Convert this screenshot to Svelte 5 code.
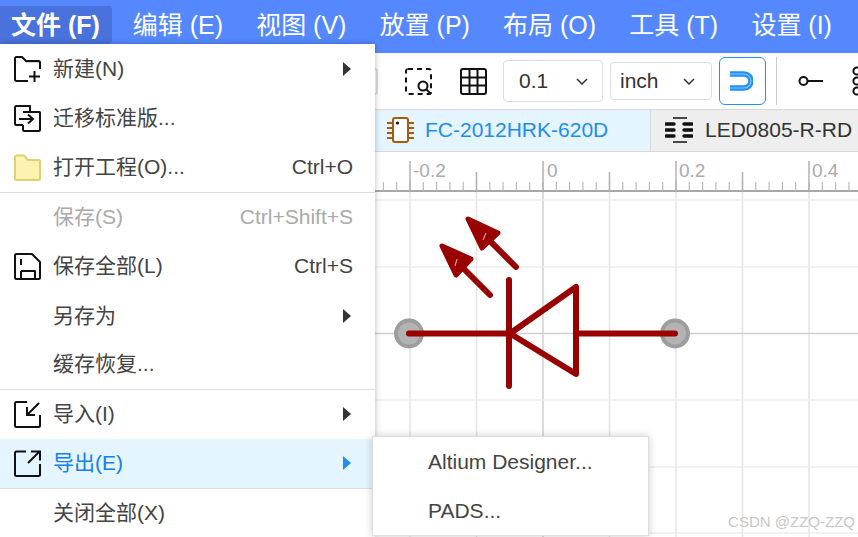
<script>
  const menu = [
    { label: '新建(N)', icon: 'new', arrow: true },
    { label: '迁移标准版...', icon: 'move' },
    { label: '打开工程(O)...', icon: 'open', key: 'Ctrl+O', sep: true },
    { label: '保存(S)', key: 'Ctrl+Shift+S', disabled: true },
    { label: '保存全部(L)', icon: 'save', key: 'Ctrl+S' },
    { label: '另存为', arrow: true },
    { label: '缓存恢复...', sep: true },
    { label: '导入(I)', icon: 'import', arrow: true },
    { label: '导出(E)', icon: 'export', arrow: true, active: true, sep: true },
    { label: '关闭全部(X)' }
  ];
  const nav = ['文件 (F)', '编辑 (E)', '视图 (V)', '放置 (P)', '布局 (O)', '工具 (T)', '设置 (I)'];
  const step = 66.5;
  const origin = 543;
  const vs = Array.from({ length: 9 }, (_, i) => origin + (i - 3) * step);
  const hs = [200, 267, 333.5, 400, 467, 533];
  const minors = Array.from({ length: 50 }, (_, i) => origin + (i - 15) * (step / 5)).filter((x) => x > 375);
  const labels = [
    { x: 413, t: '-0.2' },
    { x: 547, t: '0' },
    { x: 679, t: '0.2' },
    { x: 812, t: '0.4' }
  ];
</script>

<div class="app">
  <header class="nav">
    {#each nav as n, i}
      <div class="nav-item" class:open={i === 0}>{n}</div>
    {/each}
  </header>

  <div class="toolbar">
    <svg class="tool faint" width="27" height="27" viewBox="0 0 27 27" fill="none" stroke="#ddd" stroke-width="2">
      <rect x="1" y="1" width="25" height="25" rx="2" />
    </svg>
    <svg class="tool zoombox" width="27" height="27" viewBox="0 0 27 27" fill="none" stroke="#111" stroke-width="2">
      <rect x="1" y="1" width="25" height="25" rx="2" stroke-dasharray="5 4" />
      <circle cx="18" cy="18" r="4.5" fill="#fff" />
      <path d="M21 21l5 5" />
    </svg>
    <svg class="tool grid-ic" width="27" height="27" viewBox="0 0 27 27" fill="none" stroke="#111" stroke-width="2">
      <rect x="1" y="1" width="25" height="25" rx="2" />
      <path d="M9.5 1v25M17.5 1v25M1 9.5h25M1 17.5h25" />
    </svg>
    <div class="select big"><span>0.1</span><svg width="12" height="7" viewBox="0 0 12 7" fill="none" stroke="#333" stroke-width="1.5"><path d="M1 1l5 5 5-5" /></svg></div>
    <div class="select small"><span>inch</span><svg width="12" height="7" viewBox="0 0 12 7" fill="none" stroke="#333" stroke-width="1.5"><path d="M1 1l5 5 5-5" /></svg></div>
    <div class="magnet">
      <svg width="24" height="20" viewBox="0 0 24 20" fill="none">
        <path d="M1 3h14a7 7 0 0 1 0 14H1" stroke="#1e90ff" stroke-width="5.500" />
        <path d="M1 3h14a7 7 0 0 1 0 14H1" stroke="#fff" stroke-width="1.200" opacity=".5" />
      </svg>
    </div>
    <div class="vsep"></div>
    <svg class="pin" width="25" height="14" viewBox="0 0 25 14" fill="none" stroke="#111" stroke-width="2">
      <circle cx="5.5" cy="7" r="4" />
      <path d="M9.5 7H25" />
    </svg>
    <svg class="multi" width="14" height="30" viewBox="0 0 14 30" fill="none" stroke="#111" stroke-width="2">
      <circle cx="6" cy="5" r="3.6" /><circle cx="6" cy="15" r="3.6" /><circle cx="6" cy="25" r="3.6" />
    </svg>
  </div>

  <div class="tabs">
    <div class="tab active">
      <svg width="27" height="26" viewBox="0 0 27 26" fill="none" stroke="#a65a14" stroke-width="2">
        <rect x="6" y="1" width="15" height="24" rx="2" fill="#fff" />
        <path d="M0 6h6M0 11h6M0 16h6M0 21h6M21 6h6M21 11h6M21 16h6M21 21h6" />
        <circle cx="10.5" cy="6" r="1.6" fill="#111" stroke="none" />
      </svg>
      <span>FC-2012HRK-620D</span>
    </div>
    <div class="tab other">
      <svg width="28" height="26" viewBox="0 0 28 26" fill="none" stroke="#111">
        <path d="M8 1h14M8 25h14" stroke-width="1.4" />
        <path d="M1 7h8M19 7h8M1 13h8M19 13h8M1 19h8M19 19h8" stroke-width="3.4" stroke-linecap="round" />
      </svg>
      <span>LED0805-R-RD</span>
    </div>
  </div>

  <div class="canvas">
    <svg width="858" height="385" viewBox="0 152 858 385">
      {#each vs as x, i}
        <line x1={x} x2={x} y1="192" y2="537" stroke={i === 3 ? '#d0d0d0' : '#e4e4e4'} stroke-width="1.5" />
      {/each}
      {#each hs as y, i}
        <line x1="375" x2="858" y1={y} y2={y} stroke={i === 2 ? '#d0d0d0' : '#ececec'} stroke-width="1.5" />
      {/each}

      <line x1="375" x2="858" y1="191" y2="191" stroke="#a8a8a8" stroke-width="2" />
      {#each minors as x, i}
        <line x1={x} x2={x} y1="182" y2="191" stroke="#b8b8b8" stroke-width="1.2" />
      {/each}
      {#each vs as x, i}
        <line x1={x} x2={x} y1={i % 2 === 1 ? 161 : 172} y2="191" stroke="#b0b0b0" stroke-width="1.5" />
      {/each}
      {#each labels as l}
        <text x={l.x} y="177" class="rlabel">{l.t}</text>
      {/each}

      <circle cx="409" cy="333.5" r="13" fill="#b3b3b3" stroke="#9d9d9d" stroke-width="4" />
      <circle cx="675" cy="333.5" r="13" fill="#b3b3b3" stroke="#9d9d9d" stroke-width="4" />
      <g fill="none" stroke="#990000" stroke-width="6" stroke-linecap="round" stroke-linejoin="round">
        <path d="M409 333.5H509M576 333.5H675" />
        <path d="M509 280V386" />
        <path d="M510 333.5L576 287V374Z" />
        <path d="M490 295L458 263" />
        <path d="M442 246L471 259L456 275Z" fill="#990000" stroke-width="5" />
        <path d="M516 267L484 235" />
        <path d="M468 219L498 233L482 248Z" fill="#990000" stroke-width="5" />
      </g>
      <path d="M457 259l-2 7M486 233l-3 7" stroke="#dc9a9a" stroke-width="1.200" fill="none" />
    </svg>
    <div class="mark">CSDN @ZZQ-ZZQ</div>
  </div>

  <div class="menu">
    {#each menu as m}
      <div class="row" class:disabled={m.disabled} class:active={m.active} class:sep={m.sep}>
        <span class="ic">
          {#if m.icon === 'new'}
            <svg width="27" height="27" viewBox="0 0 27 27" fill="none" stroke="#111" stroke-width="2" stroke-linejoin="round">
              <path d="M14 25H2.5A1.5 1.5 0 0 1 1 23.500V2.500A1.500 1.500 0 0 1 2.500 1H8l4 4h12.500A1.500 1.500 0 0 1 26 6.500V13" />
              <path d="M12 5.500h13" stroke-width="1.400" />
              <path d="M20.500 15v11M15 20.500h11" />
            </svg>
          {:else if m.icon === 'move'}
            <svg width="27" height="27" viewBox="0 0 27 27" fill="none" stroke="#111" stroke-width="2" stroke-linejoin="round">
              <path d="M9 20H2.500A1.500 1.500 0 0 1 1 18.500V2.500A1.500 1.500 0 0 1 2.500 1H16v5" />
              <path d="M9 7h16.500a.5.500 0 0 1 .5.500V25a1 1 0 0 1-1 1H10.500A1.500 1.500 0 0 1 9 24.500V20" />
              <path d="M5 14h14M14 9.500l5 4.500-5 4.500" stroke-linejoin="miter" />
            </svg>
          {:else if m.icon === 'open'}
            <svg width="27" height="27" viewBox="0 0 27 27" fill="#fdf3b0" stroke="#e3cf70" stroke-width="2" stroke-linejoin="round">
              <path d="M1 3a1.500 1.500 0 0 1 1.500-1.500H10L14 6h11a1.500 1.500 0 0 1 1 1.500v17a1.500 1.500 0 0 1-1.500 1.500h-22A1.500 1.500 0 0 1 1 24.500Z" />
            </svg>
          {:else if m.icon === 'save'}
            <svg width="27" height="27" viewBox="0 0 27 27" fill="none" stroke="#111" stroke-width="2" stroke-linejoin="round">
              <path d="M2.500 1H18l8 8v15.500a1.500 1.500 0 0 1-1.500 1.500h-22A1.500 1.500 0 0 1 1 24.500v-22A1.500 1.500 0 0 1 2.500 1Z" />
              <path d="M7 18h14v8M7 18v8" />
              <path d="M7 6v6" />
            </svg>
          {:else if m.icon === 'import'}
            <svg width="27" height="27" viewBox="0 0 27 27" fill="none" stroke="#111" stroke-width="2" stroke-linejoin="round">
              <path d="M13 1H2.500A1.500 1.500 0 0 0 1 2.500v22A1.500 1.500 0 0 0 2.500 26h22a1.500 1.500 0 0 0 1.500-1.500V14" />
              <path d="M25 2L13 14M13 6v8h8" stroke-linejoin="miter" />
            </svg>
          {:else if m.icon === 'export'}
            <svg width="27" height="27" viewBox="0 0 27 27" fill="none" stroke="#111" stroke-width="2" stroke-linejoin="round">
              <path d="M12 1.500H2.500A1.500 1.500 0 0 0 1 3v21.500A1.500 1.500 0 0 0 2.500 26h22a1.500 1.500 0 0 0 1.500-1.500V14" />
              <path d="M26 1L14 13M17 1.500h9v9" stroke-linejoin="miter" />
            </svg>
          {/if}
        </span>
        <span class="label">{m.label}</span>
        {#if m.key}<span class="key">{m.key}</span>{/if}
        {#if m.arrow}<span class="arrow"></span>{/if}
      </div>
    {/each}
  </div>

  <div class="submenu">
    <div class="sub-row">Altium Designer...</div>
    <div class="sub-row">PADS...</div>
  </div>
</div>

<style>
  :global(body) {
    margin: 0;
    background: #fff;
  }
  .app {
    position: relative;
    width: 858px;
    height: 537px;
    overflow: hidden;
    font-family: "Liberation Sans", "Noto Sans CJK SC", sans-serif;
    color: #333;
  }
  .nav {
    height: 53px;
    background: #5588ff;
    display: flex;
    align-items: flex-start;
    gap: 21.200px;
    padding-top: 6px;
    box-sizing: border-box;
  }
  .nav-item {
    height: 38px;
    line-height: 38px;
    padding: 0 1px 0 11px;
    font-size: 25px;
    color: #fff;
    white-space: nowrap;
  }
  .nav-item.open {
    width: 112px;
    box-sizing: border-box;
    background: #4a72dc;
    border-radius: 0 4px 4px 0;
    font-weight: 700;
    margin-right: -11.500px;
  }
  .toolbar {
    height: 57px;
    border-bottom: 1px solid #d8d8d8;
    box-sizing: border-box;
    display: flex;
    align-items: center;
    padding-left: 351px;
    overflow: hidden;
  }
  .tool { flex: none; }
  .zoombox { margin-left: 27px; }
  .grid-ic { margin-left: 28px; }
  .select {
    flex: none;
    box-sizing: border-box;
    border: 1px solid #dcdcdc;
    border-radius: 4px;
    display: flex;
    align-items: center;
    justify-content: space-between;
    font-size: 21px;
  }
  .select.big {
    width: 100px;
    height: 42px;
    margin-left: 16px;
    padding: 0 14px 0 15px;
  }
  .select.small {
    width: 102px;
    height: 38px;
    margin-left: 7px;
    padding: 0 16px 0 9px;
  }
  .magnet {
    flex: none;
    box-sizing: border-box;
    width: 47px;
    height: 48px;
    margin-left: 7px;
    padding-right: 3px;
    border: 1px solid #1e90ff;
    border-radius: 6px;
    display: flex;
    align-items: center;
    justify-content: center;
  }
  .vsep {
    flex: none;
    width: 1px;
    height: 48px;
    background: #ccc;
    margin-left: 10px;
  }
  .pin { flex: none; margin-left: 21px; }
  .multi { flex: none; margin-left: 28px; }
  .tabs {
    height: 42px;
    display: flex;
    border-bottom: 1px solid #d8d8d8;
    box-sizing: border-box;
    padding-left: 375px;
    font-size: 21px;
  }
  .tab {
    display: flex;
    align-items: center;
    gap: 12px;
    box-sizing: border-box;
    white-space: nowrap;
    padding-bottom: 1px;
  }
  .tab.active {
    width: 275px;
    background: #e4f5ff;
    color: #1e8cf0;
    padding-left: 12px;
    gap: 11px;
  }
  .tab.other {
    flex: 1;
    background: #eeeeee;
    border-left: 1px solid #d8d8d8;
    padding-left: 14px;
    color: #333;
  }
  .canvas {
    position: relative;
    height: 385px;
    background: #fff;
  }
  .canvas svg { display: block; }
  .rlabel {
    font-size: 19px;
    fill: #aaa;
  }
  .mark {
    position: absolute;
    right: 3px;
    bottom: 7px;
    font-size: 15px;
    color: #c6c6c6;
  }
  .menu {
    position: absolute;
    left: 0;
    top: 44px;
    width: 375px;
    height: 493px;
    box-sizing: border-box;
    padding-top: 1px;
    background: #fff;
    box-shadow: 0 0 6px rgba(0, 0, 0, 0.28);
  }
  .row {
    height: 49.300px;
    box-sizing: border-box;
    display: flex;
    align-items: center;
    padding: 0 22px 1px 14px;
    font-size: 21px;
    color: #444;
    white-space: nowrap;
  }
  .row.sep { border-bottom: 1px solid #dcdcdc; }
  .row.disabled { color: #aaa; }
  .row.active { background: #e4f5ff; color: #1580e6; }
  .ic {
    flex: none;
    width: 39px;
    height: 27px;
  }
  .ic svg { display: block; }
  .label {
    flex: 1;
    line-height: 24px;
  }
  .key {
    font-size: 21px;
    line-height: 24px;
  }
  .arrow {
    width: 0;
    height: 0;
    margin-right: 2px;
    border-left: 8px solid #333;
    border-top: 7px solid transparent;
    border-bottom: 7px solid transparent;
  }
  .row.active .arrow { border-left-color: #1e8cf0; }
  .submenu {
    position: absolute;
    left: 372px;
    top: 436px;
    width: 277px;
    height: 100px;
    box-sizing: border-box;
    background: #fff;
    border: 1px solid #dedede;
    box-shadow: 0 0 8px rgba(0, 0, 0, 0.2);
  }
  .sub-row {
    height: 49px;
    line-height: 49px;
    padding-left: 55px;
    font-size: 21px;
    color: #444;
  }
</style>
